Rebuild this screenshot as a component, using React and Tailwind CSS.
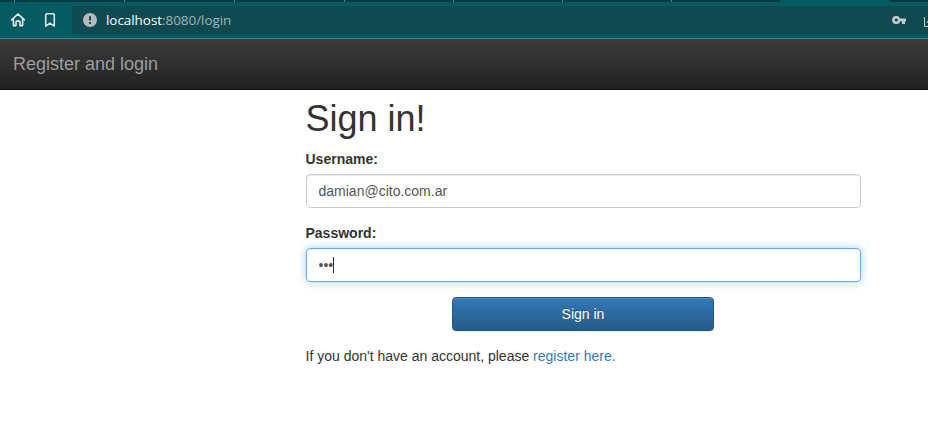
import React from "react";

function Tab({ wide }) {
  return <div className={`${wide ? "w-[110px]" : "w-[109px]"} shrink-0 border-l border-[#4c868c]`} />;
}

function BrowserBar() {
  return (
    <div className="h-[39px] border-b border-[#4b8186] bg-[#045c62]">
      <div className="flex h-[2px] overflow-hidden bg-[#023a40] pl-[14px]">
        <Tab wide /><Tab wide /><Tab wide /><Tab /><Tab /><Tab /><Tab />
        <div className="w-[110px] shrink-0 bg-[#045c62]" />
      </div>
      <div className="flex h-9 items-center">
        <svg className="ml-[10px] h-4 w-4 shrink-0" viewBox="0 0 16 16" fill="none" stroke="#e4eeee" strokeWidth="1.6" strokeLinejoin="round" strokeLinecap="round">
          <path d="M1.7 7.9 L8 2 L14.3 7.9 M3.4 7.5 V13.6 H6 V10.6 Q6 8.9 8 8.9 Q10 8.9 10 10.6 V13.6 H12.6 V7.5" />
        </svg>
        <svg className="ml-4 h-4 w-4 shrink-0" viewBox="0 0 16 16" fill="none" stroke="#e4eeee" strokeWidth="1.5" strokeLinejoin="round">
          <path d="M3.7 3 Q3.7 1.8 4.9 1.8 H11.1 Q12.3 1.8 12.3 3 V14.1 L8 11.1 L3.7 14.1 Z" />
        </svg>
        <div className="ml-[14px] flex h-7 flex-1 items-center overflow-hidden rounded-l-[3px] bg-[#0e4a50]">
          <svg className="ml-[11px] h-[14px] w-[14px] shrink-0" viewBox="0 0 14 14">
            <circle cx="7" cy="7" r="7" fill="#b5bbbd" />
            <path d="M7 3.2 V7.6 M7 9 V10.9" stroke="#0e4a50" strokeWidth="2" />
          </svg>
          <span className="ml-[9px] w-[127px] shrink-0 font-['Open_Sans',sans-serif] text-[13.5px] leading-5 tracking-[-0.06px] whitespace-nowrap text-[#9cb6b9]">
            <span className="text-white">localhost</span>:8080/login
          </span>
          <svg className="mr-[18px] ml-auto h-[9px] w-[14px] shrink-0 -translate-y-[0.5px]" viewBox="0 0 14 9">
            <path fillRule="evenodd" fill="#c5c8c9" d="M4.3 .2 A4.2 4.2 0 1 0 8.2 6 H10 V8.5 H13 V6 H14 V3 H8.2 A4.2 4.2 0 0 0 4.3 .2 Z M4.3 2.9 A1.5 1.5 0 1 1 4.2 2.9 Z" />
          </svg>
          <svg className="mt-[3px] h-[10px] w-1 shrink-0" viewBox="0 0 4 10" fill="none" stroke="#c0c7c8">
            <path d="M.5 0 V9.5 H4 M4 4 Q3 4.5 3 6" />
          </svg>
        </div>
      </div>
    </div>
  );
}

export default function App() {
  return (
    <div className="h-[434px] w-[928px] overflow-hidden bg-white font-['Liberation_Sans',Arial,sans-serif] text-sm leading-5 text-[#333]">
      <BrowserBar />
      <nav className="h-[51px] border-b border-[#080808] bg-linear-to-b from-[#3c3c3c] to-[#222] pl-[13px] pt-[15px]">
        <span className="block text-lg leading-5 text-[#9d9d9d]">Register and login</span>
      </nav>
      <main className="ml-[305.5px] w-[555px] pt-[9px]">
        <h1 className="mb-[10px] h-10 text-4xl leading-10">Sign in!</h1>
        <label className="mb-[5px] block font-bold">Username:</label>
        <div className="flex h-[34px] items-center rounded border border-[#ccc] px-3 text-[#555] shadow-[inset_0_1px_1px_rgba(0,0,0,0.075)]">
          damian@cito.com.ar
        </div>
        <label className="mt-[15px] mb-[5px] block font-bold">Password:</label>
        <div className="flex h-[34px] items-center rounded border border-[#66afe9] px-3 shadow-[inset_0_1px_1px_rgba(0,0,0,0.075),0_0_8px_rgba(102,175,233,0.6)]">
          <span className="text-[#555]">•••</span>
          <span className="-ml-[0.3px] h-4 w-px bg-[#333]" />
        </div>
        <button className="mx-auto mt-[15px] block h-[34px] w-[262px] rounded border border-[#245580] bg-linear-to-b from-[#337ab7] to-[#265a88] text-sm text-white shadow-[inset_0_1px_0_rgba(255,255,255,0.15),0_1px_1px_rgba(0,0,0,0.075)] [text-shadow:0_-1px_0_rgba(0,0,0,0.2)]">
          Sign in
        </button>
        <p className="mt-[15px]">
          If you don't have an account, please <a className="text-[#337ab7]">register here.</a>
        </p>
      </main>
    </div>
  );
}
